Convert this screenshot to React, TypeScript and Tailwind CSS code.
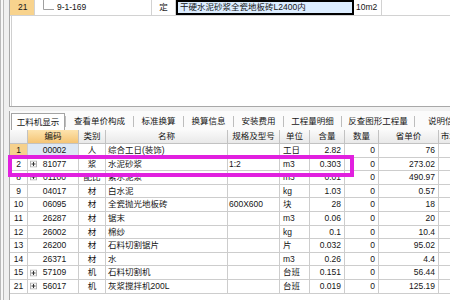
import type { ReactNode } from "react";

/* ─── data ─── */

type Item = {
  no: string;
  code: string;
  plus?: boolean;
  kind: string;
  name: string;
  spec: string;
  unit: string;
  qty: string;
  num: string;
  price: string;
};

const ITEMS: Item[] = [
  { no: "1", code: "00002", kind: "人", name: "综合工日(装饰)", spec: "", unit: "工日", qty: "2.82", num: "0", price: "76" },
  { no: "2", code: "81077", plus: true, kind: "浆", name: "水泥砂浆", spec: "1:2", unit: "m3", qty: "0.303", num: "0", price: "273.02" },
  { no: "8", code: "01100", plus: true, kind: "配比", name: "素水泥浆", spec: "", unit: "m3", qty: "0.01", num: "0", price: "490.97" },
  { no: "9", code: "04017", kind: "材", name: "白水泥", spec: "", unit: "kg", qty: "1.03", num: "0", price: "0.57" },
  { no: "10", code: "06095", kind: "材", name: "全瓷抛光地板砖", spec: "600X600", unit: "块", qty: "28", num: "0", price: "18" },
  { no: "11", code: "26287", kind: "材", name: "锯末", spec: "", unit: "m3", qty: "0.06", num: "0", price: "20" },
  { no: "12", code: "26002", kind: "材", name: "棉纱", spec: "", unit: "kg", qty: "0.1", num: "0", price: "10.4" },
  { no: "13", code: "26200", kind: "材", name: "石料切割锯片", spec: "", unit: "片", qty: "0.032", num: "0", price: "95.02" },
  { no: "14", code: "26371", kind: "材", name: "水", spec: "", unit: "m3", qty: "0.26", num: "0", price: "4.4" },
  { no: "15", code: "57109", plus: true, kind: "机", name: "石料切割机", spec: "", unit: "台班", qty: "0.151", num: "0", price: "56.44" },
  { no: "21", code: "56017", plus: true, kind: "机", name: "灰浆搅拌机200L", spec: "", unit: "台班", qty: "0.019", num: "0", price: "125.19" },
];

const TABS = [
  { label: "查看单价构成", w: "w-[67px]" },
  { label: "标准换算", w: "w-[49px]" },
  { label: "换算信息", w: "w-[49px]" },
  { label: "安装费用", w: "w-[49px]" },
  { label: "工程量明细", w: "w-[57px]" },
  { label: "反查图形工程量", w: "w-[72px]" },
  { label: "说明信息", w: "w-[60px]" },
];

const CELL = "h-full shrink-0 border-r border-b border-[#cdcdcd] flex items-center overflow-hidden whitespace-nowrap";
const HEAD = "h-full shrink-0 border-r border-b border-[#c2c2c2] flex items-center justify-center overflow-hidden whitespace-nowrap bg-gradient-to-b from-[#fafafa] to-[#e9e9e9]";

/* ─── page ─── */

export default function App() {
  return (
    <div className="relative flex w-[450px] h-[300px] overflow-hidden bg-white text-[8.5px] leading-none text-[#151515] font-['Liberation_Sans','Noto_Sans_CJK_SC',sans-serif]">
      {/* window frame */}
      <div className="flex shrink-0 h-full">
        <div className="w-px bg-[#b9b9b9]" />
        <div className="w-[2px] bg-[#f7f7f7]" />
        <div className="w-px bg-[#b9b9b9]" />
        <div className="w-[5px] bg-[#efefef]" />
      </div>

      <div className="flex flex-col flex-1 min-w-0">
        {/* ── upper grid ── */}
        <div className="h-[107px] shrink-0 border-l border-b border-[#a8a8a8] flex flex-col">
          <div className="flex h-[16px] shrink-0 border-b border-[#d2d2d2]">
            <div className="w-[25px] shrink-0 bg-[#f8d38d] border-r border-[#d2d2d2] flex items-center pl-[8px]">21</div>
            <div className="w-[117px] shrink-0 border-r border-[#d2d2d2] flex items-center">
              <svg width="14" height="16" viewBox="0 0 14 16" className="ml-[7px] shrink-0">
                <path d="M1.5 0 V9.5 H12" fill="none" stroke="#a0a0a0" strokeWidth="1" />
              </svg>
              <span className="ml-[1px]">9-1-169</span>
            </div>
            <div className="w-[24px] shrink-0 border-r border-[#d2d2d2] flex items-center justify-center">定</div>
            <div className="w-[178px] shrink-0 border-2 border-black bg-[#dcedff] flex items-center pl-[2px] whitespace-nowrap overflow-hidden">
              干硬水泥砂浆全瓷地板砖L2400内
            </div>
            <div className="w-[28px] shrink-0 border-r border-[#d2d2d2] flex items-center pl-[2px]">10m2</div>
            <div className="flex-1" />
          </div>
          <div className="flex-1 ml-[1px] border-l border-[#cfcfcf]" />
        </div>

        {/* splitter */}
        <div className="h-[4px] shrink-0 bg-[#f1f1f1]" />

        {/* ── lower panel ── */}
        <div className="flex flex-col flex-1 border-l border-[#a8a8a8]">
          {/* tabs */}
          <div className="flex h-[19px] shrink-0 items-end bg-[#fbfbfb]">
            <div className="ml-[1px] w-[54px] h-[17px] shrink-0 border border-b-0 border-[#a4a4a4] bg-white flex items-center justify-center">
              工料机显示
            </div>
            {TABS.map((t) => (
              <div key={t.label} className="flex items-center h-[17px] shrink-0">
                <span className="w-px h-[11px] bg-[#bdbdbd]" />
                <span className={`${t.w} flex justify-center whitespace-nowrap`}>{t.label}</span>
              </div>
            ))}
          </div>

          {/* header */}
          <div className="flex h-[14px] shrink-0">
            <div className={`${HEAD} w-[18px]`} />
            <div className={`${HEAD} w-[51px] from-[#fde4ae] to-[#f4c474]`}>编码</div>
            <div className={`${HEAD} w-[27px]`}>类别</div>
            <div className={`${HEAD} w-[122px]`}>名称</div>
            <div className={`${HEAD} w-[52px]`}>规格及型号</div>
            <div className={`${HEAD} w-[30px]`}>单位</div>
            <div className={`${HEAD} w-[35px]`}>含量</div>
            <div className={`${HEAD} w-[34px]`}>数量</div>
            <div className={`${HEAD} w-[60px]`}>省单价</div>
            <div className={`${HEAD} w-[30px]`}>市场价</div>
          </div>

          {/* rows */}
          {ITEMS.map((it, i) => (
            <GridRow key={it.no} item={it} selected={i === 0} />
          ))}
          <div className="flex-1" />
        </div>
      </div>

      {/* highlight drawn over row 2 */}
      <div className="absolute left-[8px] top-[155px] w-[346px] h-[22px] border-4 border-[#e120df]" />
    </div>
  );
}

/* ─── small bits ─── */

function GridRow({ item, selected }: { item: Item; selected: boolean }) {
  return (
    <div className="flex h-[13.6px] shrink-0">
      <div className={`${CELL} w-[18px] justify-center ${selected ? "bg-[#f6d18c]" : ""}`}>{item.no}</div>
      <div className={`${CELL} w-[51px] relative justify-center ${selected ? "bg-[#dde8f5]" : ""}`}>
        {item.plus && <PlusBox />}
        <span className="pl-[3px]">{item.code}</span>
      </div>
      <div className={`${CELL} w-[27px] justify-center`}>{item.kind}</div>
      <div className={`${CELL} w-[122px] pl-[2px]`}>{item.name}</div>
      <div className={`${CELL} w-[52px] pl-[1px]`}>{item.spec}</div>
      <div className={`${CELL} w-[30px] pl-[3px]`}>{item.unit}</div>
      <Num w="w-[35px]">{item.qty}</Num>
      <Num w="w-[34px]">{item.num}</Num>
      <Num w="w-[60px]">{item.price}</Num>
      <div className={`${CELL} w-[30px]`} />
    </div>
  );
}

function Num({ w, children }: { w: string; children: ReactNode }) {
  return <div className={`${CELL} ${w} justify-end pr-[3px]`}>{children}</div>;
}

function PlusBox() {
  return (
    <svg width="7" height="7" viewBox="0 0 7 7" className="absolute left-[2px] top-1/2 -translate-y-1/2">
      <rect x="0.5" y="0.5" width="6" height="6" fill="#fafafa" stroke="#b0b0b0" />
      <path d="M1.5 3.5 H5.5 M3.5 1.5 V5.5" stroke="#333" strokeWidth="1" />
    </svg>
  );
}
